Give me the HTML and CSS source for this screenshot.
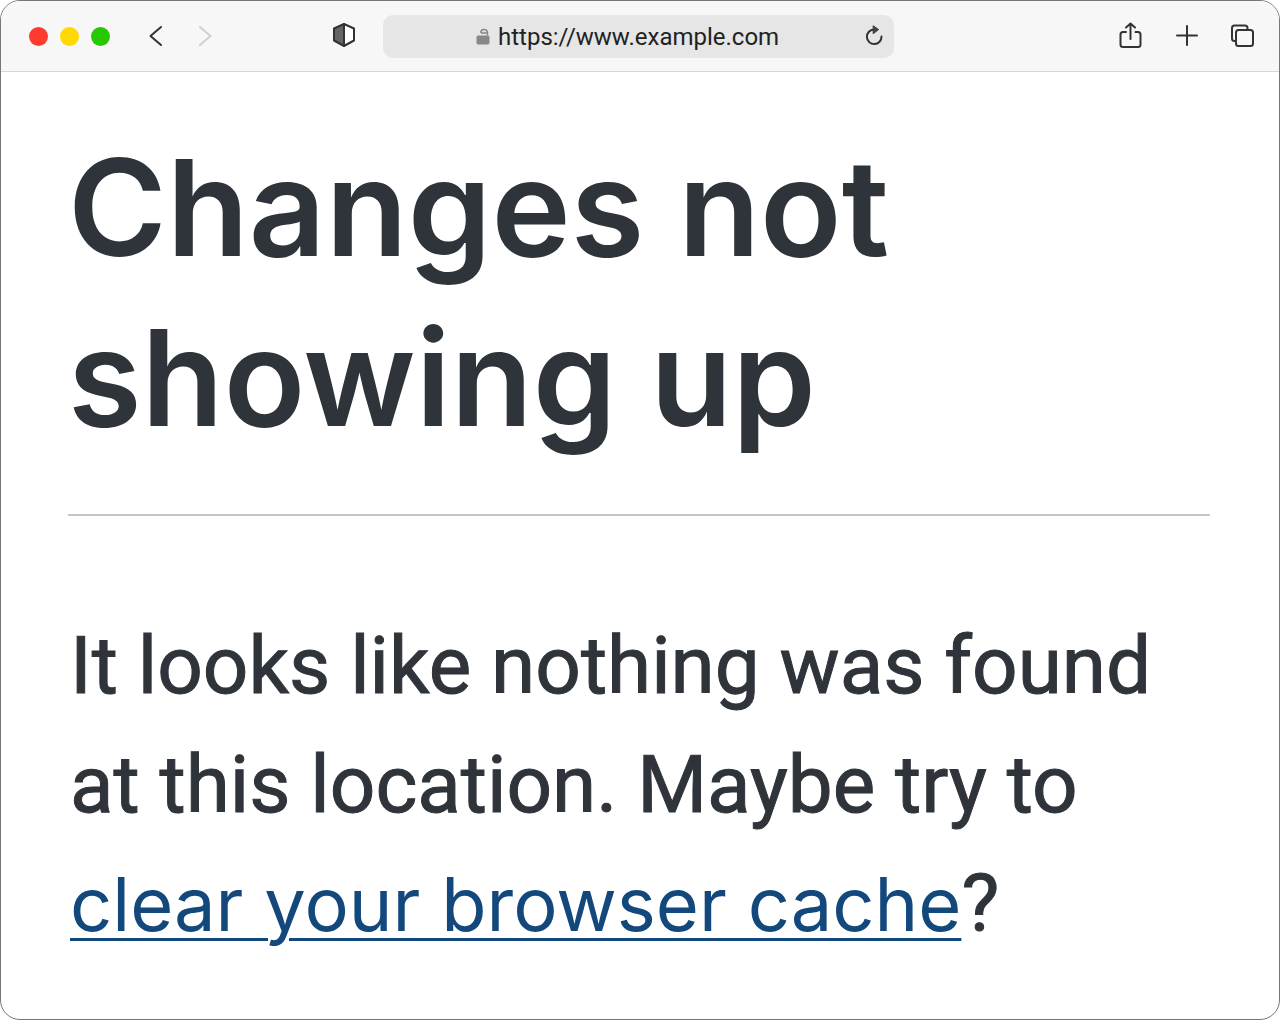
FILE: index.html
```html
<!DOCTYPE html>
<html lang="en">
<head>
<meta charset="utf-8">
<meta name="viewport" content="width=device-width, initial-scale=1">
<title>Changes not showing up</title>
<link rel="stylesheet" href="styles.css">
</head>
<body>
<div class="window">
  <header class="toolbar">
    <div class="lead">
      <div class="lights">
        <button class="light close" aria-label="Close"></button>
        <button class="light minimize" aria-label="Minimize"></button>
        <button class="light maximize" aria-label="Maximize"></button>
      </div>
      <div class="history">
        <button class="tool" aria-label="Back"><svg width="24" height="24" viewBox="0 0 24 24"><path d="M17 3 6.500 12 17 21"/></svg></button>
        <button class="tool muted" aria-label="Forward"><svg width="24" height="24" viewBox="0 0 24 24"><path d="M7 3 17.500 12 7 21"/></svg></button>
      </div>
      <button class="tool privacy" aria-label="Privacy report"><svg width="24" height="28" viewBox="0 0 24 28"><path d="M12 2 2 6.500V18.500L12 24z" fill="#666"/><path d="M12 2 22 6.500V18.500L12 24z" fill="#fff"/></svg></button>
    </div>
    <form class="address">
      <div class="location">
        <svg class="lock" width="14" height="18" viewBox="0 0 14 18"><rect x="1" y="9" width="12" height="8" rx="1" fill="#888" stroke-width="1"/><path d="M5 6V5Q5 2.500 8 2.500T11.500 5.500V8.500M5 6H11" stroke-width="1.500"/></svg>
        <input class="url" type="text" aria-label="Address" value="https://www.example.com">
      </div>
      <button class="tool reload" type="button" aria-label="Reload"><svg width="20" height="22" viewBox="0 0 20 22"><path d="M10 4.500A7.300 7.300 0 1 0 17.500 11.500"/><path d="M9.500 1 14.500 4.600 9.500 8.500z" fill="#444" stroke-width="1"/></svg></button>
    </form>
    <div class="actions">
      <button class="tool" aria-label="Share"><svg width="24" height="28" viewBox="0 0 24 28"><path d="M7 10H4Q1.500 10 1.500 12.500V22.500Q1.500 25 4 25H19Q21.500 25 21.500 22.500V12.500Q21.500 10 19 10H16.500M11.500 17V1.500M7 5.500 11.500 1.500 16 5.500"/></svg></button>
      <button class="tool" aria-label="New tab"><svg width="24" height="24" viewBox="0 0 24 24"><path d="M12 2V21M2 11.500H22"/></svg></button>
      <button class="tool" aria-label="Show all tabs"><svg width="24" height="24" viewBox="0 0 24 24"><path d="M16 5V4Q16 1.500 13.500 1.500H3Q.500 1.500 .500 4V14.500Q.500 17 3 17H4" transform="translate(.5)"/><rect x="5" y="6" width="17" height="16" rx="2.500"/></svg></button>
    </div>
  </header>
  <main class="page">
    <h1 class="title">Changes not showing up</h1>
    <hr class="rule">
    <p class="message">It looks like nothing was found at this location. Maybe try to <a class="link" href="#">clear your browser cache</a>?</p>
  </main>
</div>
</body>
</html>
```
FILE: styles.css
```css
* { box-sizing: border-box; }
body { margin: 0; background: #fff; font-family: Inter, "Liberation Sans", sans-serif; }
.window { min-height: 100vh; border: 1px solid #777; border-radius: 20px; overflow: hidden; background: #fff; }
.toolbar {
  display: grid; grid-template-columns: 52fr 75fr 53fr; align-items: center;
  height: 71px; padding: 0 24px 0 28px; background: #f7f7f7; border-bottom: 1px solid #d5d5d5;
}
.lead { display: flex; align-items: center; gap: 34px; padding-right: 27px; }
.lights { display: flex; gap: 12px; }
.light { width: 19px; height: 19px; padding: 0; border: 0; border-radius: 50%; }
.close { background: #ff3b30; }
.minimize { background: #ffd900; }
.maximize { background: #28c800; }
.history { display: flex; gap: 25px; }
.privacy { margin-left: auto; }
.tool { display: flex; padding: 0; border: 0; background: none; color: #333; }
.muted { color: #d0d0d0; }
.tool svg { fill: none; stroke: currentColor; stroke-width: 2; stroke-linecap: round; stroke-linejoin: round; }
.address { display: flex; align-items: center; height: 43px; padding: 0 10px 0 8px; border-radius: 10px; background: #e6e6e6; }
.location { flex: 1; display: flex; align-items: center; justify-content: center; gap: 8px; }
.lock { fill: none; stroke: #888; }
.url { field-sizing: content; padding: 1px 0 0; border: 0; outline: 0; background: none; color: #222; font: 24px Roboto, sans-serif; }
.actions { display: flex; align-items: center; justify-content: flex-end; gap: 32px; }
.page { padding: 50px 69px 52px 67px; color: #2f343a; }
.title { max-width: 900px; margin: 0; font-size: 134px; line-height: 170px; font-weight: 600; }
.rule { height: 2px; margin: 52px 0 91px; border: 0; background: #c6c6c6; }
.message { margin: 0; padding-left: 2px; font: 400 80px/119px Roboto, sans-serif; -webkit-text-stroke: 1px currentColor; }
.link { color: #13487c; font-family: Inter, sans-serif; font-size: 74px; line-height: 1; -webkit-text-stroke: 0; text-decoration-thickness: 3px; text-underline-offset: 7px; }
```
